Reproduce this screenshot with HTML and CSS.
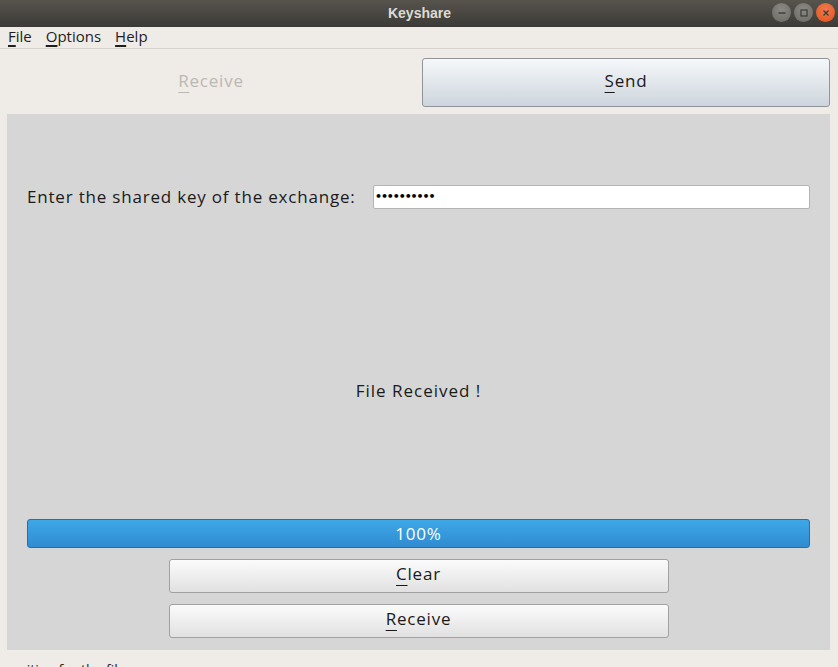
FILE: index.html
```html
<!DOCTYPE html>
<html>
<head>
<meta charset="utf-8">
<link rel="stylesheet" href="styles.css">
</head>
<body>
<div class="window">
  <div class="titlebar">
    <span class="title">Keyshare</span>
    <div class="wbtns">
      <span class="wbtn grey"><svg width="10" height="10" viewBox="0 0 10 10"><path d="M1.5 5h7" stroke="#3c3b37" stroke-width="1.4"/></svg></span>
      <span class="wbtn grey"><svg width="10" height="10" viewBox="0 0 10 10"><rect x="2" y="2" width="6" height="6" fill="none" stroke="#3c3b37" stroke-width="1.2"/></svg></span>
      <span class="wbtn close"><svg width="10" height="10" viewBox="0 0 10 10"><path d="M2.5 2.5l5 5M7.5 2.5l-5 5" stroke="#3c3b37" stroke-width="1.3"/></svg></span>
    </div>
  </div>
  <div class="menubar">
    <span class="menu"><u>F</u>ile</span>
    <span class="menu"><u>O</u>ptions</span>
    <span class="menu"><u>H</u>elp</span>
  </div>
  <div class="tabs">
    <div class="tab inactive"><u>R</u>eceive</div>
    <div class="tab active"><u>S</u>end</div>
  </div>
  <div class="panel">
    <div class="keyrow">
      <span class="label">Enter the shared key of the exchange:</span>
      <div class="input">&#8226;&#8226;&#8226;&#8226;&#8226;&#8226;&#8226;&#8226;&#8226;&#8226;</div>
    </div>
    <div class="status-area">
      <span class="received">File Received !</span>
    </div>
    <div class="progress"><span>100%</span></div>
    <div class="actions">
      <div class="btn"><u>C</u>lear</div>
      <div class="btn"><u>R</u>eceive</div>
    </div>
  </div>
  <div class="statusbar">waiting for the file</div>
</div>
</body>
</html>
```

FILE: styles.css
```css
html, body {
  margin: 0;
  padding: 0;
  background: #efebe7;
  overflow: hidden;
}
.window {
  width: 838px;
  height: 667px;
  display: flex;
  flex-direction: column;
  background: #efebe7;
}
.titlebar {
  height: 27px;
  flex: none;
  background: linear-gradient(#57544e, #3c3a36);
  display: flex;
  align-items: center;
  justify-content: center;
  position: relative;
}
.title {
  font-family: "Liberation Sans", sans-serif;
  font-weight: bold;
  font-size: 14px;
  color: #dfdbd2;
  margin-left: 1px;
  margin-top: -2px;
}
.wbtns {
  position: absolute;
  right: 3px;
  top: 3px;
  display: flex;
  gap: 3px;
}
.wbtn {
  width: 19px;
  height: 19px;
  border-radius: 50%;
  display: flex;
  align-items: center;
  justify-content: center;
}
.wbtn.grey {
  background: radial-gradient(circle at 50% 35%, #8b8984, #6b6964);
}
.wbtn.close {
  background: radial-gradient(circle at 50% 35%, #f37a4c, #e0511f);
}
.menubar {
  height: 22px;
  flex: none;
  box-sizing: border-box;
  display: flex;
  align-items: center;
  padding: 0 0 3px 8px;
  gap: 14px;
  border-bottom: 1px solid #d6d2cc;
  font-family: "Open Sans", sans-serif;
  font-size: 15px;
  color: #1e1e1e;
}
.menu u {
  text-decoration-thickness: 2px;
  text-underline-offset: 3px;
}
.tabs {
  height: 65px;
  flex: none;
  display: grid;
  grid-template-columns: 408px 408px;
  column-gap: 7px;
  padding-left: 7px;
  align-items: center;
  font-family: "Open Sans", sans-serif;
}
.tab {
  font-size: 17px;
  letter-spacing: 0.8px;
  text-align: center;
}
.tab u {
  text-underline-offset: 5px;
  text-decoration-thickness: 1px;
}
.tab.inactive {
  color: #bcb8b3;
  margin-top: -3px;
}
.tab.active {
  height: 49px;
  box-sizing: border-box;
  line-height: 44px;
  border: 1px solid #8f959b;
  border-radius: 3px;
  background: linear-gradient(#f5f8fa, #cdd5dc);
  color: #1a1a1a;
  margin-top: 1px;
}
.panel {
  flex: none;
  height: 536px;
  margin: 0 8px 0 7px;
  background: #d6d6d6;
  box-sizing: border-box;
  padding: 71px 20px 12px 20px;
  display: flex;
  flex-direction: column;
  font-family: "Open Sans", sans-serif;
  font-size: 17px;
  letter-spacing: 0.8px;
  color: #1a1a1a;
}
.keyrow {
  display: flex;
  align-items: center;
  height: 24px;
}
.label {
  width: 346px;
  flex: none;
  white-space: nowrap;
  margin-top: -1px;
}
.input {
  flex: 1;
  height: 24px;
  box-sizing: border-box;
  border: 1px solid #b4b4b4;
  border-radius: 2px;
  background: #fff;
  font-family: "DejaVu Sans", sans-serif;
  font-weight: bold;
  font-size: 11px;
  line-height: 22px;
  padding-left: 1px;
  letter-spacing: -1.1px;
  color: #000;
}
.status-area {
  flex: 1;
  display: flex;
  justify-content: center;
  align-items: flex-start;
  padding-top: 171px;
}
.received {
  line-height: 22px;
  letter-spacing: 1px;
}
.progress {
  height: 29px;
  flex: none;
  box-sizing: border-box;
  border: 1px solid #2b6ea6;
  border-radius: 3px;
  background: linear-gradient(#3ea7e8, #2f8ccf);
  color: #fff;
  display: flex;
  align-items: center;
  justify-content: center;
}
.actions {
  display: flex;
  flex-direction: column;
  align-items: center;
  gap: 11px;
  margin-top: 11px;
}
.btn {
  width: 500px;
  height: 34px;
  box-sizing: border-box;
  border: 1px solid #a1a1a1;
  border-radius: 3px;
  background: linear-gradient(#fbfbfb, #e1e1e1);
  text-align: center;
  line-height: 28px;
  color: #1a1a1a;
}
.btn u {
  text-underline-offset: 5px;
  text-decoration-thickness: 1px;
}
.statusbar {
  padding: 10px 0 0 8px;
  font-family: "Open Sans", sans-serif;
  font-size: 14px;
  line-height: 20px;
  color: #1e1e1e;
}
```
